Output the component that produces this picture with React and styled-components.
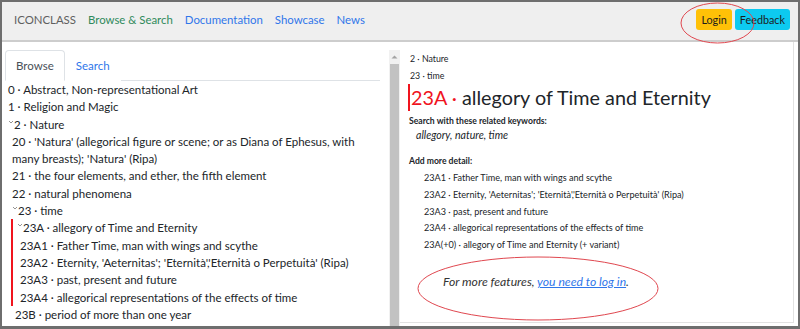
import React from 'react'
import styled, { createGlobalStyle } from 'styled-components'

const GlobalStyle = createGlobalStyle`
	html, body {
		margin: 0;
		padding: 0;
		background: #fff;
		overflow: hidden;
	}
	body {
		font-family: Lato, "Open Sans", sans-serif;
		color: #212529;
	}
`

const Frame = styled.div`
	position: relative;
	width: 800px;
	height: 329px;
	box-sizing: border-box;
	border: 2px solid #6e6e6e;
	border-bottom-width: 3px;
	display: flex;
	flex-direction: column;
	overflow: hidden;
`

const Navbar = styled.nav`
	height: 40px;
	box-sizing: border-box;
	flex-shrink: 0;
	background: #efefef;
	border-bottom: 2px solid #cdcdcd;
	display: flex;
	align-items: center;
	padding: 0 8px 3px 12px;
	font-size: 11.4px;
`
const NavLinks = styled.div`
	display: flex;
	gap: 12px;
	flex: 1;
`
const NavLink = styled.a`
	color: ${p => p.$color || '#2f76ea'};
	text-decoration: none;
`
const NavButton = styled.button`
	font: inherit;
	font-size: 10.8px;
	height: 21px;
	padding: 0 5px;
	margin-left: 3px;
	border: none;
	border-radius: 3px;
	color: #1c1c1c;
	background: ${p => p.$bg};
`

const Main = styled.div`
	flex: 1;
	display: flex;
	min-height: 0;
`

const LeftPane = styled.div`
	width: 398px;
	flex-shrink: 0;
	padding-top: 8px;
	box-sizing: border-box;
	display: flex;
`
const ScrollArea = styled.div`
	flex: 1;
	overflow: hidden;
	padding: 0 9px 0 3px;
`
const Scrollbar = styled.div`
	width: 11px;
	background: #f1f1f1;
	display: flex;
	flex-direction: column;
	align-items: center;
	padding-top: 5px;
	box-sizing: border-box;
`
const ScrollThumb = styled.div`
	margin-top: 5px;
	width: 9px;
	flex: 1;
	background: #c2c2c2;
`

const Tabs = styled.div`
	display: flex;
	border-bottom: 1px solid #dee2e6;
	font-size: 11.5px;
`
const Tab = styled.div`
	height: 29px;
	display: flex;
	align-items: center;
	padding: 0 10px;
	margin-bottom: -1px;
	border: 1px solid ${p => (p.$active ? '#dee2e6' : 'transparent')};
	border-bottom-color: ${p => (p.$active ? '#fff' : 'transparent')};
	border-radius: 4px 4px 0 0;
	color: ${p => (p.$active ? '#495057' : '#2f76ea')};
	background: #fff;
`

const Tree = styled.div`
	padding: 0 0 0 3px;
	font-size: 11.5px;
	line-height: 17.3px;
`
const Row = styled.div`
	white-space: ${p => (p.$wrap ? 'normal' : 'nowrap')};
	padding-right: 20px;
`
const Children = styled.div`
	padding-left: ${p => p.$indent}px;
`
const Selected = styled.div`
	margin-left: -4px;
	border-left: 2px solid #f0141e;
	padding-left: 4px;
`
const CaretIcon = styled.svg`
	width: 6px;
	height: 6px;
	vertical-align: 4px;
`

const Caret = () => (
	<CaretIcon viewBox="0 0 6 6">
		<path d="M1 2 L3 4 L5 2" fill="none" stroke="#888" strokeWidth="0.9" />
	</CaretIcon>
)

const RightPane = styled.div`
	flex: 1;
	margin: 0 4px 3px 0;
	border-right: 1px solid #e2e2e2;
	border-bottom: 1px solid #e2e2e2;
	padding: 8px 0 0 9px;
`
const Crumb = styled.div`
	font-size: 8.8px;
	line-height: 17px;
	padding-left: 1px;
`
const Heading = styled.h1`
	margin: 0 0 0 -1px;
	border-left: 2px solid #f0141e;
	padding-left: 1px;
	font-size: 19.8px;
	font-weight: 400;
	line-height: 27px;
	white-space: nowrap;
`
const Notation = styled.span`
	color: #f0141e;
`
const Label = styled.div`
	font-size: 8.6px;
	font-weight: 700;
	line-height: 14px;
	margin-top: ${p => p.$top}px;
`
const Keywords = styled.div`
	font-size: 10.6px;
	font-style: italic;
	line-height: 15px;
	padding-left: 7px;
`
const DetailList = styled.div`
	padding: 2px 0 0 15px;
	font-size: 9.1px;
	line-height: 16.75px;
`
const Note = styled.p`
	margin: 20px 0 0 34px;
	font-size: 12.2px;
	font-style: italic;
	color: #333;
`
const NoteLink = styled.a`
	color: #2f76ea;
	text-decoration: underline;
`

const Annotations = styled.svg`
	position: absolute;
	left: -2px;
	top: -2px;
	width: 800px;
	height: 329px;
	pointer-events: none;
`

const details = [
	['23A1', 'Father Time, man with wings and scythe'],
	['23A2', "Eternity, 'Aeternitas'; 'Eternità','Eternità o Perpetuità' (Ripa)"],
	['23A3', 'past, present and future'],
	['23A4', 'allegorical representations of the effects of time'],
	['23A(+0)', 'allegory of Time and Eternity (+ variant)'],
]

export default function App() {
	return (
		<Frame>
			<GlobalStyle />
			<Navbar>
				<NavLinks>
					<NavLink $color="#5f5f5f">ICONCLASS</NavLink>
					<NavLink $color="#2f8a5c">Browse &amp; Search</NavLink>
					<NavLink>Documentation</NavLink>
					<NavLink>Showcase</NavLink>
					<NavLink>News</NavLink>
				</NavLinks>
				<NavButton $bg="#ffc107">Login</NavButton>
				<NavButton $bg="#0dcaf0">Feedback</NavButton>
			</Navbar>

			<Main>
				<LeftPane>
					<ScrollArea>
						<Tabs>
							<Tab $active>Browse</Tab>
							<Tab>Search</Tab>
						</Tabs>
						<Tree>
							<Row>0 · Abstract, Non-representational Art</Row>
							<Row>1 · Religion and Magic</Row>
							<Row><Caret />2 · Nature</Row>
							<Children $indent={4}>
								<Row $wrap>20 · 'Natura' (allegorical figure or scene; or as Diana of Ephesus, with many breasts); 'Natura' (Ripa)</Row>
								<Row>21 · the four elements, and ether, the fifth element</Row>
								<Row>22 · natural phenomena</Row>
								<Row><Caret />23 · time</Row>
								<Children $indent={3}>
									<Selected>
										<Row><Caret />23A · allegory of Time and Eternity</Row>
										<Children $indent={3}>
											{details.slice(0, 4).map(([code, text]) => (
												<Row key={code}>{code} · {text}</Row>
											))}
										</Children>
									</Selected>
									<Row>23B · period of more than one year</Row>
									<Row>23C · seasons</Row>
								</Children>
							</Children>
						</Tree>
					</ScrollArea>
					<Scrollbar>
						<svg width="7" height="4" viewBox="0 0 7 4">
							<path d="M0.5 3.5 L3.5 0.5 L6.5 3.5 Z" fill="#a3a3a3" />
						</svg>
						<ScrollThumb />
					</Scrollbar>
				</LeftPane>

				<RightPane>
					<Crumb>2 · Nature</Crumb>
					<Crumb>23 · time</Crumb>
					<Heading><Notation>23A · </Notation>allegory of Time and Eternity</Heading>
					<Label $top={3}>Search with these related keywords:</Label>
					<Keywords>allegory, nature, time</Keywords>
					<Label $top={11}>Add more detail:</Label>
					<DetailList>
						{details.map(([code, text]) => (
							<div key={code}>{code} · {text}</div>
						))}
					</DetailList>
					<Note>For more features, <NoteLink>you need to log in</NoteLink>.</Note>
				</RightPane>
			</Main>

			<Annotations viewBox="0 0 800 329">
				<ellipse cx="717.5" cy="23" rx="36.5" ry="20" fill="none" stroke="#e0474f" strokeWidth="1" />
				<ellipse cx="538" cy="288.5" rx="120" ry="31.5" fill="none" stroke="#e0474f" strokeWidth="1" />
			</Annotations>
		</Frame>
	)
}
